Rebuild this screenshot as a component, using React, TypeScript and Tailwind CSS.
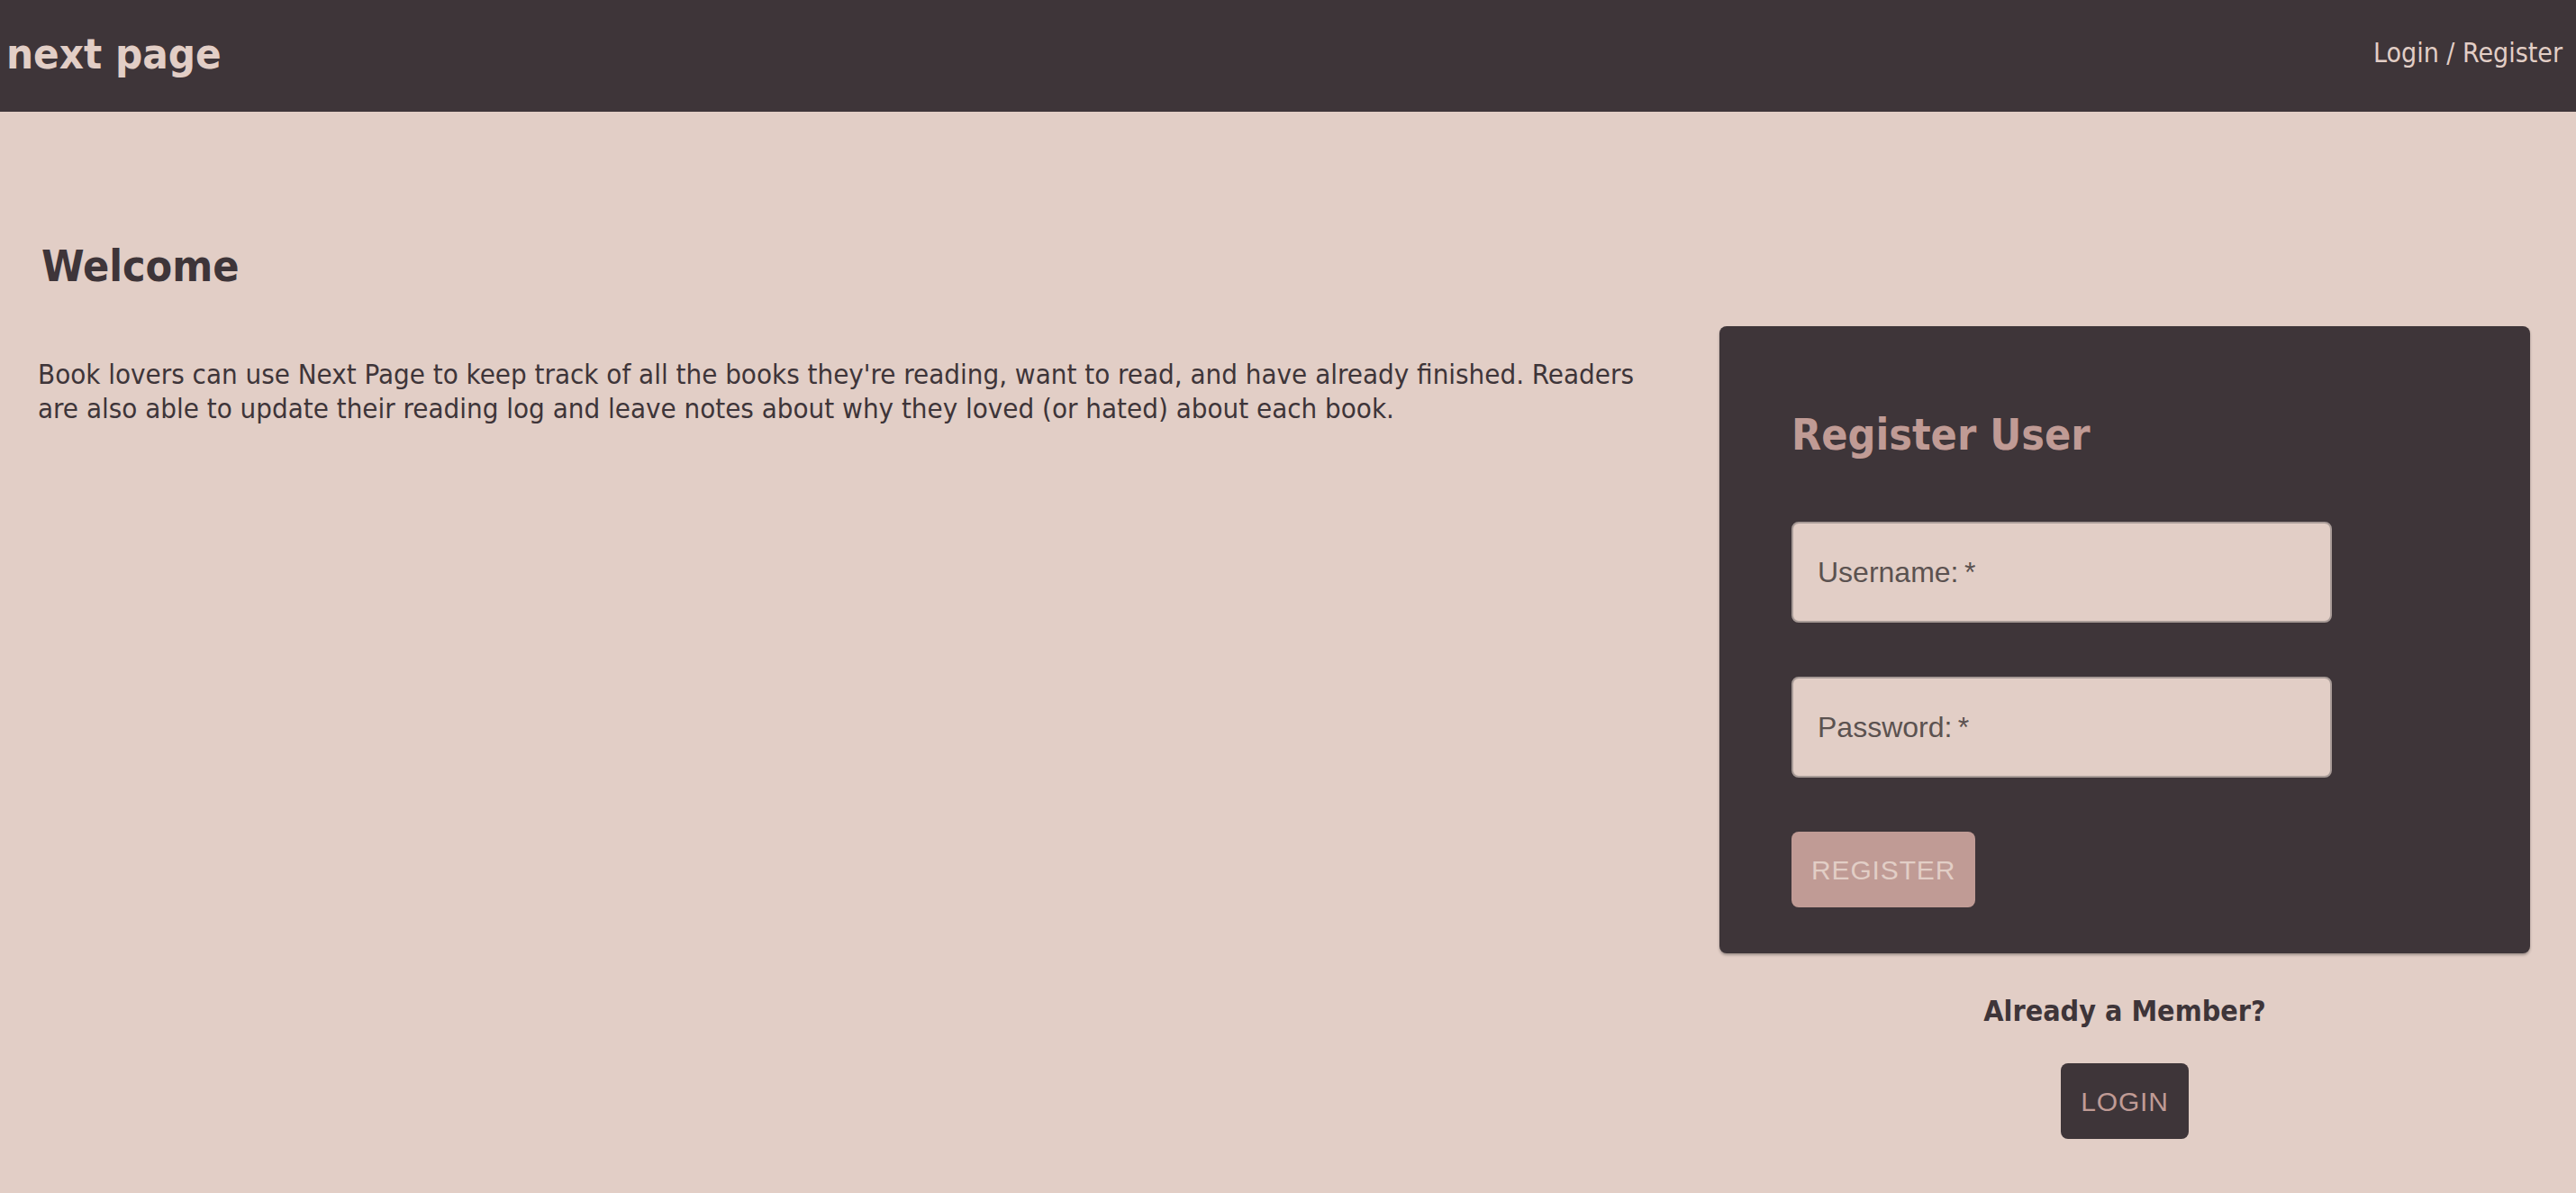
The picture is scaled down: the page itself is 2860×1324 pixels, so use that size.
import React from "react";

export default function App() {
  return (
    <div className="min-h-[1324px] w-full bg-[#e2cec6] text-[#3e3539] font-['DejaVu_Sans_Condensed','DejaVu_Sans',sans-serif] [font-stretch:condensed]">
      <header className="flex h-[124px] items-center justify-between bg-[#3e3539] pb-[6px] pl-[7px] pr-[15px]">
        <div className="text-[47px] font-bold leading-none text-[#e2cec6]">next page</div>
        <a className="text-[30px] leading-none text-[#e2cec6]">Login / Register</a>
      </header>
      <main className="flex items-start">
        <section className="flex-1 pl-[42px] pr-[60px] pt-[142px]">
          <h2 className="ml-[4px] text-[48px] font-bold leading-[58px]">Welcome</h2>
          <p className="mt-[72px] text-[31px] leading-[38px]">
            Book lovers can use Next Page to keep track of all the books they're reading, want to read, and have already finished. Readers are also able to update their reading log and leave notes about why they loved (or hated) about each book.
          </p>
        </section>
        <aside className="mr-[51px] mt-[238px] flex w-[900px] flex-col items-center">
          <div className="w-full rounded-[8px] bg-[#3e3539] pl-[80px] pr-[80px] pt-[91px] pb-[51px] shadow-[0_2px_3px_rgba(0,0,0,0.3)]">
            <h1 className="text-[48px] font-bold leading-[58px] text-[#c09b95]">Register User</h1>
            <form className="mt-[68px] flex flex-col items-start font-['Liberation_Sans',Arial,sans-serif] [font-stretch:normal]">
              <input
                placeholder={"Username:\u2009*"}
                className="h-[112px] w-[600px] rounded-[8px] border-2 border-[#a89b97] bg-[#e2cec6] px-[27px] text-[32px] text-[#5b5250] outline-none placeholder:text-[#5b5250]"
              />
              <input
                type="password"
                placeholder={"Password:\u2009*"}
                className="mt-[60px] h-[112px] w-[600px] rounded-[8px] border-2 border-[#a89b97] bg-[#e2cec6] px-[27px] text-[32px] text-[#5b5250] outline-none placeholder:text-[#5b5250]"
              />
              <button
                type="button"
                className="mt-[60px] h-[84px] rounded-[8px] bg-[#c09b95] px-[22px] text-[30px] uppercase tracking-[0.02857em] text-[#e2cec6]"
              >
                Register
              </button>
            </form>
          </div>
          <div className="mt-[44px] text-[32px] font-bold leading-[40px]">Already a Member?</div>
          <button
            type="button"
            className="mt-[38px] h-[84px] rounded-[8px] bg-[#3e3539] px-[22px] font-['Liberation_Sans',Arial,sans-serif] text-[30px] uppercase tracking-[0.02857em] text-[#c09b95] [font-stretch:normal]"
          >
            Login
          </button>
        </aside>
      </main>
    </div>
  );
}
